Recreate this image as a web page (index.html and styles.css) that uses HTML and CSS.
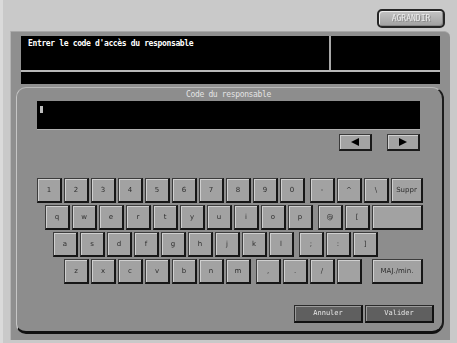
FILE: index.html
```html
<!DOCTYPE html>
<html lang="fr">
<head>
<meta charset="utf-8">
<link rel="stylesheet" href="styles.css">
</head>
<body>
<div class="screen">
  <div class="header">
    <div class="topbtn">AGRANDIR</div>
  </div>
  <div class="frame">
    <div class="msg">
      <div class="msg-main">Entrer le code d'accès du responsable</div>
      <div class="msg-side"></div>
    </div>
    <div class="msgbar"></div>
    <div class="panel">
      <div class="label">Code du responsable</div>
      <div class="input"><span class="cursor"></span></div>
      <div class="arrows">
        <div class="arrow"><svg width="10" height="8" viewBox="0 0 10 8"><polygon points="9,0 9,8 1,4" fill="#000"/></svg></div>
        <div class="arrow"><svg width="10" height="8" viewBox="0 0 10 8"><polygon points="1,0 1,8 9,4" fill="#000"/></svg></div>
      </div>
      <div class="keyboard">
        <div class="row r1">
          <div class="key">1</div><div class="key">2</div><div class="key">3</div><div class="key">4</div><div class="key">5</div><div class="key">6</div><div class="key">7</div><div class="key">8</div><div class="key">9</div><div class="key">0</div>
          <div class="key sep">-</div><div class="key">^</div><div class="key">\</div><div class="key wide32">Suppr</div>
        </div>
        <div class="row r2">
          <div class="key">q</div><div class="key">w</div><div class="key">e</div><div class="key">r</div><div class="key">t</div><div class="key">y</div><div class="key">u</div><div class="key">i</div><div class="key">o</div><div class="key">p</div>
          <div class="key sep">@</div><div class="key">[</div><div class="key wide51"></div>
        </div>
        <div class="row r3">
          <div class="key">a</div><div class="key">s</div><div class="key">d</div><div class="key">f</div><div class="key">g</div><div class="key">h</div><div class="key">j</div><div class="key">k</div><div class="key">l</div>
          <div class="key sep">;</div><div class="key">:</div><div class="key">]</div>
        </div>
        <div class="row r4">
          <div class="key">z</div><div class="key">x</div><div class="key">c</div><div class="key">v</div><div class="key">b</div><div class="key">n</div><div class="key">m</div>
          <div class="key sep">,</div><div class="key">.</div><div class="key">/</div><div class="key"></div><div class="key wide51 sep2">MAJ./min.</div>
        </div>
      </div>
      <div class="actions">
        <div class="act">Annuler</div>
        <div class="act">Valider</div>
      </div>
    </div>
  </div>
</div>
</body>
</html>
```
FILE: styles.css
```css
* { box-sizing: border-box; }
html, body {
  margin: 0;
  padding: 0;
  background: #c9c9c9;
}
body {
  width: 457px;
  height: 343px;
  overflow: hidden;
  font-family: "DejaVu Sans Mono", "Liberation Mono", monospace;
}
.screen {
  width: 457px;
  height: 343px;
  display: flex;
  flex-direction: column;
  border-left: 3px solid #dadada;
}
.header {
  height: 31px;
  display: flex;
  justify-content: flex-end;
  align-items: flex-start;
  padding: 9px 12px 0 0;
}
.topbtn {
  width: 68px;
  height: 19px;
  border: 2px solid #262626;
  border-radius: 5px;
  background: linear-gradient(#c4c4c4, #a0a0a0);
  box-shadow: inset 1px 1px 0 #ececec, inset -1px -1px 0 #888;
  color: #ececec;
  font-size: 8px;
  line-height: 15px;
  text-align: center;
  text-shadow: 1px 1px 0 #8a8a8a;
  will-change: transform;
}
.frame {
  margin: 0 7px 3px 7px;
  flex: 1;
  background: #8f8f8f;
  border-left: 1px solid #b4b4b4;
  border-top: 1px solid #a8a8a8;
  border-radius: 0 6px 0 0;
  padding: 4px 6px 6px 5px;
  display: flex;
  flex-direction: column;
}
.msg {
  margin: 0 4px 0 5px;
  height: 36px;
  display: flex;
  background: #000;
  border-bottom: 2px solid #b8b8b8;
}
.msg-main {
  flex: 1;
  color: #fff;
  font-size: 8px;
  font-weight: bold;
  letter-spacing: -0.35px;
  padding: 3px 0 0 7px;
  line-height: 10px;
  border-right: 2px solid #a8a8a8;
}
.msg-side {
  width: 109px;
}
.msgbar {
  margin: 0 4px 0 5px;
  height: 12px;
  background: #000;
}
.panel {
  margin-top: 3px;
  flex: 1;
  background: #8d8d8d;
  border-top: 1px solid #b9b9b9;
  border-left: 1px solid #c6c6c6;
  border-right: 2px solid #1c1c1c;
  border-bottom: 3px solid #111;
  border-radius: 10px 12px 12px 10px;
  padding: 0 8px 6px 20px;
  display: flex;
  flex-direction: column;
}
.label {
  height: 13px;
  text-align: center;
  color: #e4e4e4;
  font-size: 8px;
  letter-spacing: -0.35px;
  line-height: 13px;
  padding-right: 14px;
}
.input {
  margin-right: 14px;
  height: 29px;
  background: #000;
  border-bottom: 1px solid #b0b0b0;
  padding: 5px 0 0 3px;
}
.cursor {
  display: block;
  width: 3px;
  height: 7px;
  background: #bdbdbd;
}
.arrows {
  margin-top: 4px;
  margin-right: 14px;
  display: flex;
  justify-content: flex-end;
  gap: 15px;
}
.arrow {
  width: 33px;
  height: 17px;
  background: #a3a3a3;
  border: 1px solid #3a3a3a;
  border-right: 2px solid #1a1a1a;
  border-bottom: 2px solid #1a1a1a;
  box-shadow: inset 1px 1px 0 #d0d0d0;
  display: flex;
  align-items: center;
  justify-content: center;
}
.keyboard {
  margin-top: 27px;
  display: flex;
  flex-direction: column;
  gap: 2px;
}
.row {
  display: flex;
  gap: 2px;
}
.r1 { padding-left: 0; }
.r2 { padding-left: 8px; }
.r3 { padding-left: 16px; }
.r4 { padding-left: 27px; }
.key {
  width: 25px;
  height: 25px;
  background: #a2a2a2;
  border: 1px solid #3c3c3c;
  border-right: 2px solid #161616;
  border-bottom: 2px solid #161616;
  box-shadow: inset 1px 1px 0 #cfcfcf;
  color: #2e2e2e;
  font-family: "DejaVu Sans", "Liberation Sans", sans-serif;
  font-size: 7px;
  display: flex;
  align-items: center;
  justify-content: center;
  will-change: transform;
}
.key.sep { margin-left: 3px; }
.key.sep2 { margin-left: 8px; }
.key.wide32 { width: 32px; }
.key.wide51 { width: 51px; }
.actions {
  margin-top: auto;
  display: flex;
  justify-content: flex-end;
  gap: 2px;
  padding-bottom: 2px;
}
.act {
  width: 69px;
  height: 18px;
  background: #5f5f5f;
  border: 1px solid #2a2a2a;
  border-right: 2px solid #111;
  border-bottom: 2px solid #111;
  box-shadow: inset 1px 1px 0 #9a9a9a;
  color: #e6e6e6;
  font-size: 7px;
  line-height: 15px;
  text-align: center;
  will-change: transform;
}
```
